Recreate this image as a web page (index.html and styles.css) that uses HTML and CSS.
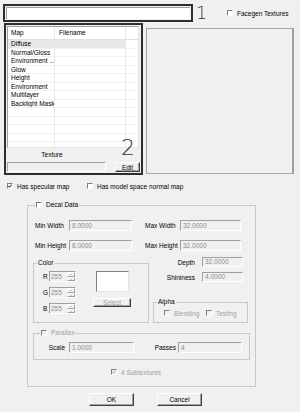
FILE: index.html
```html
<!DOCTYPE html>
<html lang="en">
<head>
    <meta charset="UTF-8">
    <meta name="viewport" content="width=device-width, initial-scale=1.0">
    <title>Texture Set</title>
    <link rel="stylesheet" href="styles.css">
</head>
<body>
    <div class="top-row">
        <div class="mark-box name-box"><div class="name-field"></div></div>
        <span class="mark-num one">1</span>
        <label class="check facegen"><span class="box"></span>Facegen Textures</label>
    </div>

    <div class="mid-row">
        <div class="mark-box list-box">
            <div class="list">
                <div class="list-head">
                    <span class="col-map">Map</span>
                    <span class="col-file">Filename</span>
                    <span class="col-rest"></span>
                </div>
                <div class="list-row selected"><span class="col-map">Diffuse</span><span class="col-file"></span><span class="col-rest"></span></div>
                <div class="list-row"><span class="col-map">Normal/Gloss</span><span class="col-file"></span><span class="col-rest"></span></div>
                <div class="list-row"><span class="col-map">Environment ...</span><span class="col-file"></span><span class="col-rest"></span></div>
                <div class="list-row"><span class="col-map">Glow</span><span class="col-file"></span><span class="col-rest"></span></div>
                <div class="list-row"><span class="col-map">Height</span><span class="col-file"></span><span class="col-rest"></span></div>
                <div class="list-row"><span class="col-map">Environment</span><span class="col-file"></span><span class="col-rest"></span></div>
                <div class="list-row"><span class="col-map">Multilayer</span><span class="col-file"></span><span class="col-rest"></span></div>
                <div class="list-row"><span class="col-map">Backlight Mask</span><span class="col-file"></span><span class="col-rest"></span></div>
                <div class="list-row"><span class="col-map"></span><span class="col-file"></span><span class="col-rest"></span></div>
                <div class="list-row"><span class="col-map"></span><span class="col-file"></span><span class="col-rest"></span></div>
                <div class="list-row"><span class="col-map"></span><span class="col-file"></span><span class="col-rest"></span></div>
                <div class="list-row"><span class="col-map"></span><span class="col-file"></span><span class="col-rest"></span></div>
                <div class="list-row"><span class="col-map"></span><span class="col-file"></span><span class="col-rest"></span></div>
            </div>
            <div class="tex-area">
                <div class="tex-left">
                    <div class="tex-label">Texture</div>
                    <div class="tex-bar"></div>
                </div>
                <button class="btn edit-btn">Edit</button>
            </div>
            <span class="mark-num two">2</span>
        </div>
        <div class="preview"></div>
    </div>

    <div class="opts">
        <label class="check spec"><span class="box"><svg viewBox="0 0 4 4" width="4" height="4"><path d="M0.3 1.8 L1.5 3.2 L3.8 0.5" stroke="#000" stroke-width="1" fill="none"/></svg></span>Has specular map</label>
        <label class="check"><span class="box"></span>Has model space normal map</label>
    </div>

    <fieldset class="group decal">
        <legend class="legend decal-legend"><span class="box"></span>Decal Data</legend>
        <div class="decal-body">
            <div class="fields">
                <div class="field-row">
                    <span class="lbl">Min Width</span>
                    <span class="input w63">8.0000</span>
                    <span class="lbl lbl-max">Max Width</span>
                    <span class="input w61">32.0000</span>
                </div>
                <div class="field-row">
                    <span class="lbl">Min Height</span>
                    <span class="input w63">8.0000</span>
                    <span class="lbl lbl-max">Max Height</span>
                    <span class="input w61">32.0000</span>
                </div>
            </div>

            <div class="lower">
                <fieldset class="group color-group">
                    <legend class="legend">Color</legend>
                    <div class="color-body">
                        <div class="spins">
                            <div class="spin-row"><span class="spin-lbl">R</span><span class="spinner"><span class="spin-val">255</span><span class="spin-btns"><span class="spin-btn up"></span><span class="spin-btn down"></span></span></span></div>
                            <div class="spin-row"><span class="spin-lbl">G</span><span class="spinner"><span class="spin-val">255</span><span class="spin-btns"><span class="spin-btn up"></span><span class="spin-btn down"></span></span></span></div>
                            <div class="spin-row"><span class="spin-lbl">B</span><span class="spinner"><span class="spin-val">255</span><span class="spin-btns"><span class="spin-btn up"></span><span class="spin-btn down"></span></span></span></div>
                        </div>
                        <div class="swatch-col">
                            <div class="swatch"></div>
                            <button class="btn select-btn" disabled>Select</button>
                        </div>
                    </div>
                </fieldset>

                <div class="right-col">
                    <div class="r-row depth-row"><span class="r-lbl">Depth</span><span class="input w41">32.0000</span></div>
                    <div class="r-row shine-row"><span class="r-lbl">Shininess</span><span class="input w41">4.0000</span></div>
                    <fieldset class="group alpha-group">
                        <legend class="legend">Alpha</legend>
                        <div class="alpha-body">
                            <label class="check off blend"><span class="box"></span>Blending</label>
                            <label class="check off"><span class="box"></span>Testing</label>
                        </div>
                    </fieldset>
                </div>
            </div>

            <fieldset class="group parallax">
                <legend class="legend par-legend"><label class="check off"><span class="box"></span>Parallax</label></legend>
                <div class="par-body">
                    <span class="p-lbl">Scale</span>
                    <span class="input w65">1.0000</span>
                    <span class="p-lbl p-lbl2">Passes</span>
                    <span class="input w64">4</span>
                </div>
            </fieldset>

            <label class="check off sub"><span class="box"><svg viewBox="0 0 4 4" width="4" height="4"><path d="M0.3 1.8 L1.5 3.2 L3.8 0.5" stroke="#a0a0a0" stroke-width="1" fill="none"/></svg></span>4 Subtextures</label>
        </div>
    </fieldset>

    <div class="buttons">
        <button class="btn dlg-btn">OK</button>
        <button class="btn dlg-btn">Cancel</button>
    </div>
</body>
</html>
```

FILE: styles.css
```css
* {
    box-sizing: border-box;
}
body {
    margin: 0;
    width: 300px;
    height: 412px;
    overflow: hidden;
    background-color: #f0f0f0;
    font-family: "Liberation Sans", Arial, sans-serif;
    font-size: 6.5px;
    color: #000;
}

/* sunken / raised bits shared by the controls */
.input, .tex-bar, .swatch, .spinner {
    border: 1px solid;
    border-color: #a0a0a0 #fff #fff #a0a0a0;
}
.btn {
    font: inherit;
    padding: 0;
    color: #000;
    background-color: #f0f0f0;
    border: 1px solid;
    border-color: #fff #404040 #404040 #fff;
    box-shadow: inset -1px -1px #a0a0a0;
}
.btn:disabled {
    color: #a0a0a0;
}

/* top row */
.top-row {
    display: flex;
    align-items: center;
    height: 18px;
    margin: 4px 0 0 3px;
}
.mark-box {
    border: 2px solid #2e2e2e;
}
.name-box {
    width: 190px;
    height: 18px;
    padding: 1px;
}
.name-field {
    height: 100%;
    background-color: #fff;
    border-top: 1px solid #a0a0a0;
    border-left: 1px solid #a0a0a0;
}
.mark-num {
    font-family: "DejaVu Sans", sans-serif;
    font-weight: 200;
    color: #333;
    line-height: 1;
}
.one {
    font-size: 17.5px;
    width: 12px;
    margin: 2px 0 0 3px;
}
.two {
    position: absolute;
    top: 112px;
    right: 6px;
    font-size: 22px;
}

/* checkboxes */
.check {
    display: flex;
    align-items: center;
    height: 8px;
    white-space: nowrap;
}
.box {
    flex: none;
    display: flex;
    width: 6px;
    height: 6px;
    margin-right: 4px;
    border: 1px solid;
    border-color: #808080 #fff #fff #808080;
    background-color: #fff;
}
.check.off {
    color: #a0a0a0;
}
.check.off .box {
    background-color: #f0f0f0;
}
.facegen {
    margin-left: 19px;
}

/* list + preview */
.mid-row {
    display: flex;
    align-items: flex-start;
    margin: 1px 0 0 4px;
}
.list-box {
    position: relative;
    width: 139px;
    height: 152px;
}
.list {
    width: 132px;
    height: 122px;
    margin: 1px 0 0 1px;
    overflow: hidden;
    background-color: #fff;
    border: 1px solid;
    border-color: #a0a0a0 #e3e3e3 #e3e3e3 #a0a0a0;
}
.list-head {
    display: flex;
    align-items: center;
    height: 13px;
    border-bottom: 1px solid #e0e0e0;
}
.list-row {
    display: flex;
    height: 8.5px;
    line-height: 8px;
    border-bottom: 1px solid #f0f0f0;
}
.col-map {
    width: 47px;
    height: 100%;
    padding-left: 3px;
    border-right: 1px solid #e6e6e6;
    white-space: nowrap;
    overflow: hidden;
}
.list-head .col-map, .list-head .col-file {
    line-height: 12px;
}
.col-file {
    width: 71px;
    height: 100%;
    padding-left: 4px;
    border-right: 1px solid #e6e6e6;
}
.col-rest {
    flex: 1;
}
.selected .col-map, .selected .col-file {
    background-color: #e8e8e8;
}
.tex-area {
    display: flex;
    align-items: flex-end;
    margin-left: 1px;
}
.tex-left {
    width: 99px;
}
.tex-label {
    height: 14px;
    line-height: 14px;
    padding-right: 9px;
    text-align: center;
}
.tex-bar {
    height: 10px;
}
.edit-btn {
    width: 25px;
    height: 10px;
    margin-left: 9px;
}
.preview {
    width: 148px;
    height: 146px;
    margin: 5px 0 0 3px;
    border: 1px solid #a8a8a8;
    border-right: 2px solid #a0a0a0;
}

/* checkbox row */
.opts {
    display: flex;
    margin: 7px 0 0 7px;
}
.spec {
    width: 80px;
}

/* group boxes */
.group {
    margin: 0;
    padding: 0;
    min-width: 0;
    border: 1px solid #c8c8c8;
}
.legend {
    display: flex;
    align-items: center;
    height: 8px;
    margin-left: 3px;
    padding: 0 1px;
    line-height: 8px;
}
.decal {
    width: 229px;
    margin: 11px 0 0 27px;
    padding-bottom: 10px;
}
.decal-legend, .par-legend {
    margin-left: 7px;
}
.par-legend {
    margin-left: 6px;
}
.decal-body {
    padding: 11px 0 0 5px;
}
.fields {
    padding-left: 2px;
}
.field-row {
    display: flex;
    align-items: center;
    height: 11px;
}
.field-row + .field-row {
    margin-top: 9px;
}
.lbl {
    width: 34px;
    white-space: nowrap;
}
.lbl-max {
    width: 35px;
    margin-left: 13px;
}
.input {
    height: 11px;
    padding-left: 2px;
    line-height: 9px;
    color: #8d8d8d;
    background-color: #f0f0f0;
}
.w63 { width: 63px; }
.w61 { width: 61px; }
.w41 { width: 41px; }
.w65 { width: 65px; }
.w64 { width: 64px; }

.lower {
    display: flex;
    align-items: flex-start;
}
.color-group {
    width: 116px;
    height: 64px;
    margin-top: 8px;
}
.color-body {
    display: flex;
    padding: 4px 0 0 9px;
}
.spins {
    display: flex;
    flex-direction: column;
    gap: 5px;
}
.spin-row {
    display: flex;
    align-items: center;
    height: 11px;
}
.spin-lbl {
    width: 6px;
}
.spinner {
    display: flex;
    width: 27px;
    height: 11px;
    background-color: #f0f0f0;
}
.spin-val {
    flex: 1;
    padding-left: 1px;
    line-height: 9px;
    color: #8d8d8d;
}
.spin-btns {
    display: flex;
    flex-direction: column;
    width: 8px;
}
.spin-btn {
    position: relative;
    flex: 1;
    border: 1px solid;
    border-color: #fff #a0a0a0 #a0a0a0 #fff;
}
.spin-btn::after {
    content: "";
    position: absolute;
    left: 1.5px;
    top: 1px;
    border-left: 1.5px solid transparent;
    border-right: 1.5px solid transparent;
}
.up::after {
    border-bottom: 1.5px solid #b0b0b0;
}
.down::after {
    border-top: 1.5px solid #b0b0b0;
}
.swatch-col {
    display: flex;
    flex-direction: column;
    align-items: center;
    width: 38px;
    margin-left: 17px;
}
.swatch {
    width: 33px;
    height: 21px;
    background-color: #fff;
    border-color: #808080 #e3e3e3 #e3e3e3 #808080;
}
.select-btn {
    width: 38px;
    height: 9px;
    margin-top: 6px;
    line-height: 7px;
}

.right-col {
    display: flex;
    flex-direction: column;
    width: 96px;
    margin-left: 4px;
}
.r-row {
    display: flex;
    align-items: center;
    height: 10px;
}
.r-row .input {
    height: 10px;
    line-height: 8px;
}
.depth-row {
    margin-top: 6px;
}
.shine-row {
    margin-top: 5px;
}
.r-lbl {
    width: 42px;
    margin-right: 7px;
    text-align: right;
}
.alpha-group {
    width: 95px;
    height: 25px;
    margin-top: 16px;
}
.alpha-body {
    display: flex;
    margin-top: 3px;
    padding-left: 10px;
}
.blend {
    width: 42px;
}

.parallax {
    width: 217px;
    margin-top: 6px;
    padding-bottom: 6px;
}
.par-body {
    display: flex;
    align-items: center;
    height: 11px;
    margin-top: 5px;
}
.p-lbl {
    width: 31px;
    margin-right: 4px;
    text-align: right;
}
.p-lbl2 {
    width: 42px;
    margin-right: 2px;
}
.sub {
    margin: 8px 0 0 78px;
}

/* dialog buttons */
.buttons {
    display: flex;
    gap: 23px;
    margin: 6px 0 0 89px;
}
.dlg-btn {
    width: 45px;
    height: 13px;
}
```
